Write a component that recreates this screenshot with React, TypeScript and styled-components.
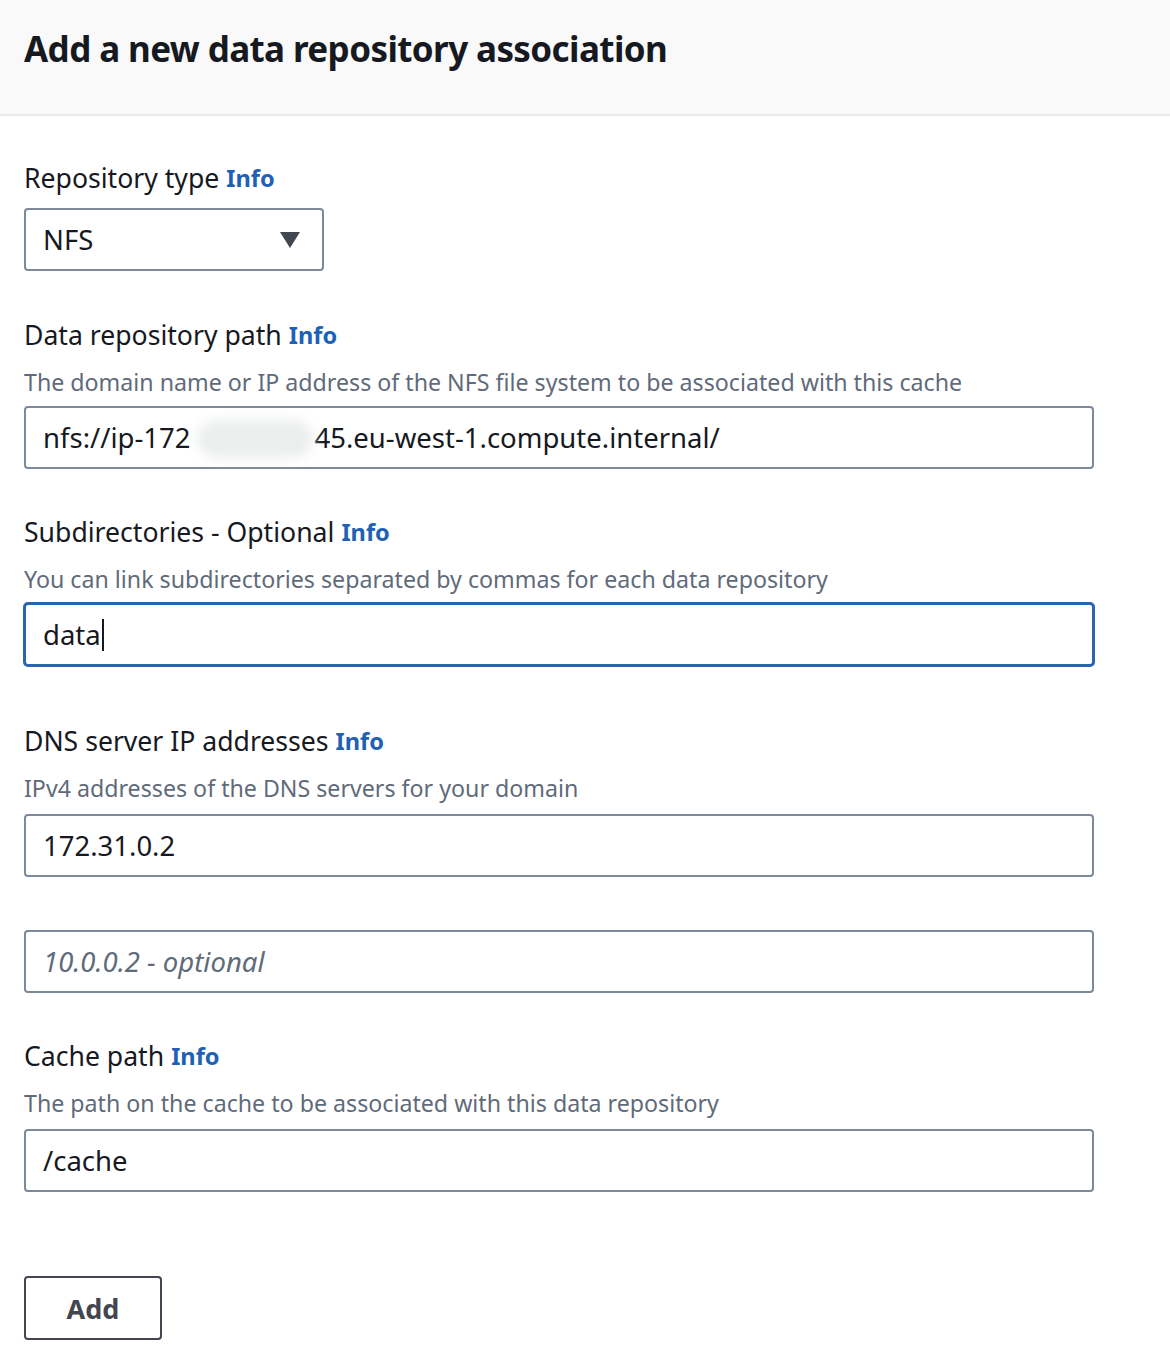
import React from "react";
import styled, { createGlobalStyle } from "styled-components";

const Global = createGlobalStyle`
  html, body { margin: 0; padding: 0; background: #ffffff; }
  body { font-family: "Noto Sans", "Open Sans", sans-serif; color: #16191f; }
  * { box-sizing: border-box; }
`;

const Page = styled.div`
  width: 1170px;
  min-height: 1366px;
  background: #ffffff;
`;

const Header = styled.header`
  height: 116px;
  background: #f9f9f9;
  border-bottom: 2px solid #e9ebed;
  padding: 24px 24px 0;
  display: flex;
  align-items: flex-start;
`;

const Title = styled.h1`
  margin: 0;
  font-family: "Noto Sans", sans-serif;
  font-size: 35px;
  line-height: 50px;
  font-weight: 700;
  letter-spacing: -0.6px;
  color: #16191f;
`;

const Form = styled.main`
  padding: 40px 24px 0;
  display: flex;
  flex-direction: column;
`;

const Field = styled.section<{ $mt?: number }>`
  display: flex;
  flex-direction: column;
  margin-top: ${(p) => p.$mt ?? 0}px;
`;

const Label = styled.div`
  height: 44px;
  line-height: 44px;
  font-size: 26.6px;
  color: #16191f;
  display: flex;
  align-items: center;
  gap: 7px;
  white-space: nowrap;
`;

const InfoLink = styled.a`
  font-weight: 700;
  font-size: 23.6px;
  color: #2161b5;
  text-decoration: none;
`;

const Description = styled.div`
  margin-top: 9px;
  height: 32px;
  line-height: 32px;
  font-size: 23.2px;
  color: #5f6b7a;
  white-space: nowrap;
`;

const InputBox = styled.div<{ $mt?: number; $width?: number }>`
  margin-top: ${(p) => p.$mt ?? 8}px;
  width: ${(p) => (p.$width ? `${p.$width}px` : "1070px")};
  height: 63px;
  border: 2px solid #7d8998;
  border-radius: 4px;
  background: #ffffff;
  display: flex;
  align-items: center;
  padding: 0 17px;
  font-size: 27.5px;
  color: #16191f;
  white-space: nowrap;
`;

const FocusedInput = styled(InputBox)`
  width: 1072px;
  height: 65px;
  margin-left: -1px;
  border: 3px solid #2a63b0;
  border-radius: 5px;
`;

const Placeholder = styled.span`
  color: #5f6b7a;
  font-style: italic;
`;

const Caret = styled.span`
  display: inline-block;
  width: 2px;
  height: 32px;
  background: #16191f;
  margin-left: 1px;
`;

const Blur = styled.span`
  display: inline-block;
  width: 124px;
  height: 40px;
  vertical-align: middle;
  position: relative;
  &::before {
    content: "";
    position: absolute;
    left: 6px;
    right: 2px;
    top: 2px;
    bottom: 0;
    border-radius: 20px;
    background: #eceeee;
    filter: blur(6px);
  }
`;

const SelectBox = styled(InputBox)`
  justify-content: space-between;
  padding-right: 22px;
`;

const Arrow = styled.svg`
  width: 20px;
  height: 16px;
  display: block;
`;

const AddButton = styled.button`
  margin-top: 84px;
  width: 138px;
  height: 64px;
  border: 2px solid #424650;
  border-radius: 4px;
  background: #ffffff;
  font-family: "Noto Sans", sans-serif;
  font-size: 27px;
  font-weight: 700;
  color: #424650;
  cursor: pointer;
  align-self: flex-start;
`;

const Info = () => <InfoLink href="#">Info</InfoLink>;

export default function App() {
  return (
    <Page>
      <Global />
      <Header>
        <Title>Add a new data repository association</Title>
      </Header>
      <Form>
        <Field>
          <Label>
            Repository type <Info />
          </Label>
          <SelectBox $width={300}>
            <span>NFS</span>
            <Arrow viewBox="0 0 20 16">
              <path d="M0 0 H20 L10 16 Z" fill="#424650" />
            </Arrow>
          </SelectBox>
        </Field>

        <Field $mt={42}>
          <Label>
            Data repository path <Info />
          </Label>
          <Description>
            The domain name or IP address of the NFS file system to be associated with this cache
          </Description>
          <InputBox>
            nfs://ip-172<Blur />45.eu-west-1.compute.internal/
          </InputBox>
        </Field>

        <Field $mt={41}>
          <Label>
            Subdirectories - Optional <Info />
          </Label>
          <Description>
            You can link subdirectories separated by commas for each data repository
          </Description>
          <FocusedInput $mt={7}>
            data
            <Caret />
          </FocusedInput>
        </Field>

        <Field $mt={52}>
          <Label>
            DNS server IP addresses <Info />
          </Label>
          <Description>IPv4 addresses of the DNS servers for your domain</Description>
          <InputBox $mt={10}>172.31.0.2</InputBox>
          <InputBox $mt={53}>
            <Placeholder>10.0.0.2 - optional</Placeholder>
          </InputBox>
        </Field>

        <Field $mt={41}>
          <Label>
            Cache path <Info />
          </Label>
          <Description>The path on the cache to be associated with this data repository</Description>
          <InputBox $mt={10}>/cache</InputBox>
        </Field>

        <AddButton>Add</AddButton>
      </Form>
    </Page>
  );
}
